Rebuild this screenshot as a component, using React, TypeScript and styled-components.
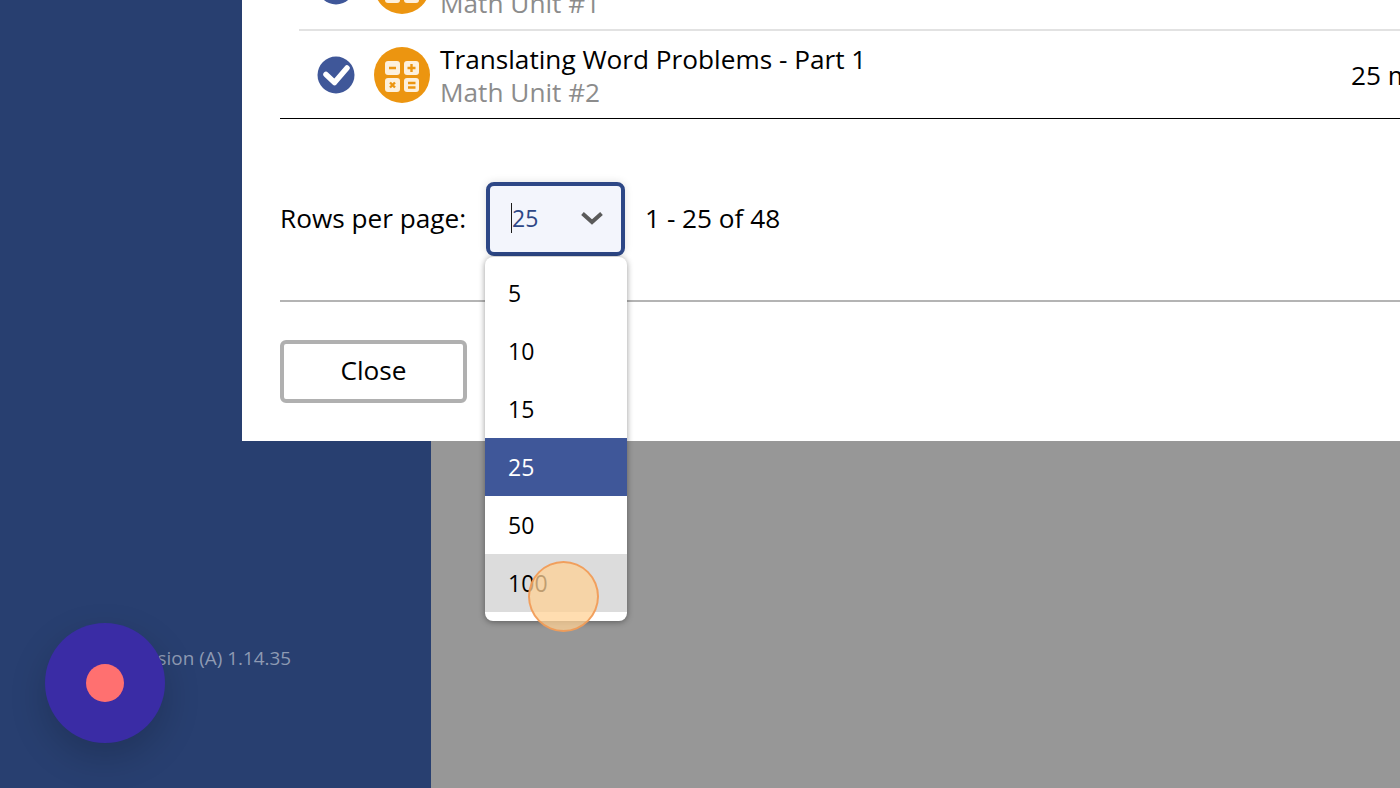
import React from 'react';
import styled, { createGlobalStyle } from 'styled-components';

const GlobalStyle = createGlobalStyle`
  html, body {
    margin: 0;
    padding: 0;
    height: 100%;
    overflow: hidden;
    font-family: 'Open Sans', 'Liberation Sans', sans-serif;
    color: #000;
  }
`;

const lessons = [
  { title: 'Translating Word Problems - Part 1', unit: 'Math Unit #1', time: '25 min' },
  { title: 'Translating Word Problems - Part 1', unit: 'Math Unit #2', time: '25 min' },
];

const rowOptions = [5, 10, 15, 25, 50, 100];

const CheckIcon = () => (
  <svg width="38" height="38" viewBox="0 0 38 38" aria-hidden="true">
    <circle cx="19" cy="19" r="18.5" fill="#3f5799" />
    <path
      d="M9 18.500l8.500 8L30 12"
      fill="none"
      stroke="#fff"
      strokeWidth="5.500"
      strokeLinecap="round"
      strokeLinejoin="round"
    />
  </svg>
);

const MathIcon = () => (
  <svg width="56" height="56" viewBox="0 0 56 56" aria-hidden="true">
    <circle cx="28" cy="28" r="28" fill="#ec9510" />
    <rect x="11" y="14" width="15" height="14" rx="3" fill="#fdf0dc" />
    <rect x="30" y="14" width="15" height="14" rx="3" fill="#fdf0dc" />
    <rect x="11" y="31" width="15" height="14" rx="3" fill="#fdf0dc" />
    <rect x="30" y="31" width="15" height="14" rx="3" fill="#fdf0dc" />
    <path
      d="M15 21h7M33.500 21h8M37.500 17v8M16 35.500l5 5M21 35.500l-5 5M34 36h7.500M34 40.500h7.500"
      stroke="#ec9510"
      strokeWidth="2.400"
      fill="none"
    />
  </svg>
);

const Chevron = () => (
  <svg width="24" height="14" viewBox="0 0 24 14" aria-hidden="true">
    <path d="M2.500 2.500L12 11l9.500-8.500" fill="none" stroke="#5a5a5a" strokeWidth="4" />
  </svg>
);

export default function App() {
  return (
    <Page>
      <GlobalStyle />
      <Sidebar>
        <Version>Version (A) 1.14.35</Version>
      </Sidebar>
      <Backdrop />

      <Modal>
        <LessonTable>
          {lessons.map((lesson) => (
            <LessonRow key={lesson.unit}>
              <CheckSlot>
                <CheckIcon />
              </CheckSlot>
              <MathIcon />
              <LessonText>
                <LessonTitle>{lesson.title}</LessonTitle>
                <LessonUnit>{lesson.unit}</LessonUnit>
              </LessonText>
              <LessonTime>{lesson.time}</LessonTime>
            </LessonRow>
          ))}
        </LessonTable>

        <Pagination>
          <PaginationLabel>Rows per page:</PaginationLabel>
          <SelectWrap>
            <SelectBox>
              <SelectValue>25</SelectValue>
              <Chevron />
            </SelectBox>
            <Dropdown>
              {rowOptions.map((option) => (
                <Option key={option} $selected={option === 25} $hovered={option === 100}>
                  {option}
                </Option>
              ))}
            </Dropdown>
          </SelectWrap>
          <PaginationLabel>1 - 25 of 48</PaginationLabel>
        </Pagination>

        <ModalFooter>
          <CloseButton>Close</CloseButton>
        </ModalFooter>
      </Modal>

      <ClickMarker />
      <RecordButton>
        <RecordDot />
      </RecordButton>
    </Page>
  );
}

const Page = styled.div`
  position: relative;
  display: flex;
  width: 1400px;
  height: 788px;
  overflow: hidden;
`;

const Sidebar = styled.aside`
  width: 431px;
  flex: none;
  display: flex;
  flex-direction: column;
  justify-content: flex-end;
  padding: 0 0 117px 128px;
  box-sizing: border-box;
  background: #283f70;
`;

const Version = styled.div`
  font-size: 18.9px;
  line-height: 26px;
  color: #8e9ab3;
  white-space: nowrap;
`;

const Backdrop = styled.div`
  flex: 1;
  background: #979797;
`;

const Modal = styled.section`
  position: absolute;
  top: 0;
  left: 242px;
  width: 1158px;
  height: 441px;
  display: flex;
  flex-direction: column;
  justify-content: flex-end;
  padding: 0 0 38px 38px;
  box-sizing: border-box;
  background: #fff;
`;

const LessonTable = styled.div`
  flex: none;
  border-bottom: 1px solid #000;
`;

const LessonRow = styled.div`
  height: 87px;
  margin-left: 19px;
  display: flex;
  align-items: center;
  border-bottom: 2px solid #e2e2e2;
  box-sizing: content-box;

  &:last-child {
    border-bottom: 0;
  }
`;

const CheckSlot = styled.div`
  width: 75px;
  padding-left: 18px;
  box-sizing: border-box;
  display: flex;
  align-items: center;
`;

const LessonText = styled.div`
  flex: 1;
  margin-left: 10px;
  padding-top: 3px;
`;

const LessonTitle = styled.div`
  font-size: 26.2px;
  line-height: 32px;
  white-space: nowrap;
`;

const LessonUnit = styled.div`
  font-size: 26.2px;
  line-height: 34px;
  color: #8c8c8c;
`;

const LessonTime = styled.div`
  width: 49px;
  flex: none;
  font-size: 26.2px;
  white-space: nowrap;
`;

const Pagination = styled.div`
  flex: none;
  display: flex;
  align-items: center;
  gap: 20px;
  height: 74px;
  margin-top: 63px;
`;

const PaginationLabel = styled.span`
  padding-bottom: 2px;
  font-size: 26.2px;
  line-height: 34px;
  white-space: nowrap;
`;

const SelectWrap = styled.div`
  position: relative;
  width: 139px;
  height: 74px;
`;

const SelectBox = styled.div`
  height: 100%;
  display: flex;
  align-items: center;
  justify-content: space-between;
  padding: 0 17px 2px 22px;
  box-sizing: border-box;
  border: 4px solid #2d4786;
  border-radius: 8px;
  background: #f3f5fc;
  box-shadow: 0 0 8px rgba(0, 0, 0, 0.12);
`;

const SelectValue = styled.span`
  position: relative;
  font-size: 23px;
  color: #2d4786;

  &::before {
    content: '';
    position: absolute;
    left: -1px;
    top: 1px;
    width: 1px;
    height: 30px;
    background: #1a1a1a;
  }
`;

const Dropdown = styled.ul`
  position: absolute;
  top: 75px;
  left: -1px;
  width: 142px;
  height: 364px;
  margin: 0;
  padding: 7px 0 0;
  box-sizing: border-box;
  list-style: none;
  background: #fff;
  border-radius: 8px;
  box-shadow: 0 1px 6px rgba(0, 0, 0, 0.4);
  overflow: hidden;
`;

const Option = styled.li<{ $selected?: boolean; $hovered?: boolean }>`
  height: 58px;
  display: flex;
  align-items: center;
  padding-left: 23px;
  font-size: 23px;
  color: ${(p) => (p.$selected ? '#fff' : '#000')};
  background: ${(p) => (p.$selected ? '#3f5799' : p.$hovered ? '#dcdcdc' : 'transparent')};
`;

const ModalFooter = styled.div`
  flex: none;
  margin-top: 44px;
  padding-top: 38px;
  border-top: 2px solid #b4b4b4;
`;

const CloseButton = styled.button`
  display: block;
  width: 187px;
  height: 63px;
  padding: 0 0 4px;
  border: 4px solid #b0b0b0;
  border-radius: 6px;
  background: #fff;
  font-family: inherit;
  font-size: 26.2px;
  color: #000;
`;

const ClickMarker = styled.div`
  position: absolute;
  left: 528px;
  top: 561px;
  width: 71px;
  height: 71px;
  box-sizing: border-box;
  border: 2px solid rgba(240, 150, 80, 0.85);
  border-radius: 50%;
  background: rgba(255, 210, 150, 0.75);
`;

const RecordButton = styled.div`
  position: absolute;
  left: 45px;
  top: 623px;
  width: 120px;
  height: 120px;
  display: flex;
  align-items: center;
  justify-content: center;
  border-radius: 50%;
  background: #3a2ca5;
  box-shadow: 0 14px 36px rgba(0, 0, 0, 0.18);
`;

const RecordDot = styled.div`
  width: 38px;
  height: 38px;
  border-radius: 50%;
  background: #ff7070;
`;
